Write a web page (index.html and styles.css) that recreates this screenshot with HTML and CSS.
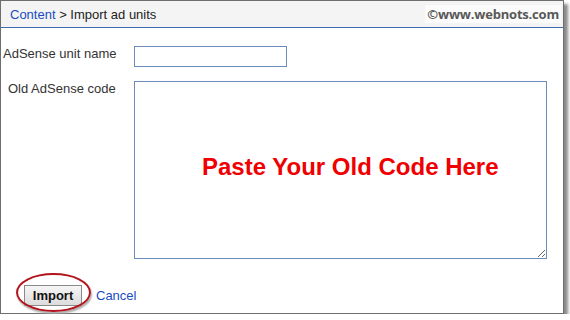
FILE: index.html
```html
<!DOCTYPE html>
<html lang="en">
  <head>
    <meta charset="UTF-8" />
    <title>Import ad units</title>
    <link rel="stylesheet" href="styles.css">
  </head>
  <body>
    <div class="frame">
      <div class="header">
        <div class="crumbs"><a href="#">Content</a> &gt; Import ad units</div>
        <div class="mark">©www.webnots.com</div>
      </div>

      <div class="form">
        <label class="name-label" for="unitName">AdSense unit name</label>
        <input id="unitName" type="text" />

        <label class="code-label" for="oldCode">Old AdSense code</label>
        <div class="code-box">
          <textarea id="oldCode"></textarea>
          <div class="hint">Paste Your Old Code Here</div>
        </div>
      </div>

      <div class="actions">
        <span class="ring"></span>
        <button type="button">Import</button>
        <a href="#">Cancel</a>
      </div>
    </div>
  </body>
</html>
```

FILE: styles.css
```css
body {
  margin: 0;
  padding: 0;
  background-color: #fff;
  font-family: "Liberation Sans", Arial, sans-serif;
  font-size: 12px;
  color: #222;
}

.frame {
  width: 562px;
  height: 312px;
  border: 1px solid #6e6e6e;
  box-shadow: 4px 4px 3px #8a8a8a;
  position: relative;
}

.header {
  height: 26px;
  background-color: #f4f4f4;
  border-bottom: 1px solid #3d6cb3;
  display: flex;
  justify-content: space-between;
  align-items: center;
}

.crumbs {
  padding-left: 9px;
  font-size: 13px;
}

.crumbs a,
.actions a {
  color: #1a4cc0;
  text-decoration: none;
}

.mark {
  margin-right: 2px;
  padding: 0 2px;
  background-color: #fbfbfb;
  color: #585858;
  font-family: "Open Sans", sans-serif;
  font-weight: 700;
  font-size: 13px;
  letter-spacing: -0.2px;
}

.form {
  display: grid;
  grid-template-columns: 133px 413px;
  row-gap: 14px;
  padding-top: 18px;
}

.form label {
  color: #333;
  font-size: 13px;
}

.name-label {
  padding-left: 2px;
}

.code-label {
  padding-left: 7px;
}

.form input {
  width: 149px;
  height: 17px;
  margin: 0;
  border: 1px solid #6c8cb8;
  padding: 1px;
}

.code-box {
  position: relative;
}

.form textarea {
  display: block;
  width: 409px;
  height: 174px;
  margin: 0;
  border: 1px solid #6c8cb8;
  padding: 1px;
  resize: both;
}

.hint {
  position: absolute;
  left: 68px;
  top: 72px;
  color: #f00000;
  font-weight: bold;
  font-size: 24px;
}

.actions {
  position: relative;
  display: flex;
  align-items: center;
  gap: 14px;
  padding: 26px 0 0 23px;
}

.actions button {
  width: 58px;
  height: 21px;
  border: 1px solid #8a8a8a;
  background: linear-gradient(#f6f6f6, #dcdcdc);
  font-family: "Liberation Sans", Arial, sans-serif;
  font-weight: bold;
  font-size: 13px;
  color: #111;
  padding: 0;
}

.actions a {
  font-size: 13px;
}

.ring {
  position: absolute;
  left: 15px;
  top: 14px;
  width: 71px;
  height: 35px;
  border: 2px solid #b3141c;
  border-radius: 50%;
  box-shadow: 1px 2px 2px #aaa;
}
```
